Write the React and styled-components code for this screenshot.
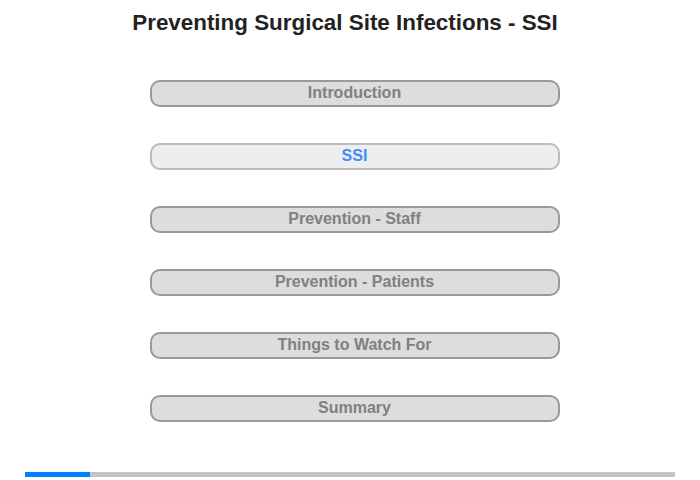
import styled, { createGlobalStyle } from "styled-components";

const GlobalStyle = createGlobalStyle`
  body {
    margin: 0;
    background: #fff;
    font-family: "Liberation Sans", Arial, sans-serif;
  }
`;

const Page = styled.div`
  width: 700px;
  height: 480px;
  display: flex;
  flex-direction: column;
  align-items: center;
  box-sizing: border-box;
`;

const Title = styled.h1`
  margin: 10px 0 0 -10px;
  font-size: 22.4px;
  line-height: 25px;
  font-weight: bold;
  color: #222;
`;

const Menu = styled.nav`
  display: flex;
  flex-direction: column;
  gap: 36px;
  margin: 45px 0 0 9px;
`;

const MenuButton = styled.button`
  width: 410px;
  height: 27px;
  box-sizing: border-box;
  border: 2px solid ${(p) => (p.$active ? "#bbb" : "#999")};
  border-radius: 10px;
  background: ${(p) => (p.$active ? "#eee" : "#ddd")};
  color: ${(p) => (p.$active ? "#3d8ef8" : "#808080")};
  font-family: "Liberation Sans", Arial, sans-serif;
  font-size: 16px;
  font-weight: bold;
  padding: 0 0 1px;
  cursor: pointer;
`;

const Progress = styled.div`
  margin-top: auto;
  margin-bottom: 3px;
  width: 650px;
  height: 5px;
  background: #c4c4c4;
`;

const ProgressFill = styled.div`
  height: 100%;
  background: #0080ff;
`;

const items = [
  "Introduction",
  "SSI",
  "Prevention - Staff",
  "Prevention - Patients",
  "Things to Watch For",
  "Summary"
];

const App = () => {
  const active = 1;
  const progress = 10;
  return (
    <>
      <GlobalStyle />
      <Page>
        <Title>Preventing Surgical Site Infections - SSI</Title>
        <Menu>
          {items.map((item, i) => (
            <MenuButton key={item} $active={i === active}>
              {item}
            </MenuButton>
          ))}
        </Menu>
        <Progress>
          <ProgressFill style={{ width: `${progress}%` }} />
        </Progress>
      </Page>
    </>
  );
};

export default App;
